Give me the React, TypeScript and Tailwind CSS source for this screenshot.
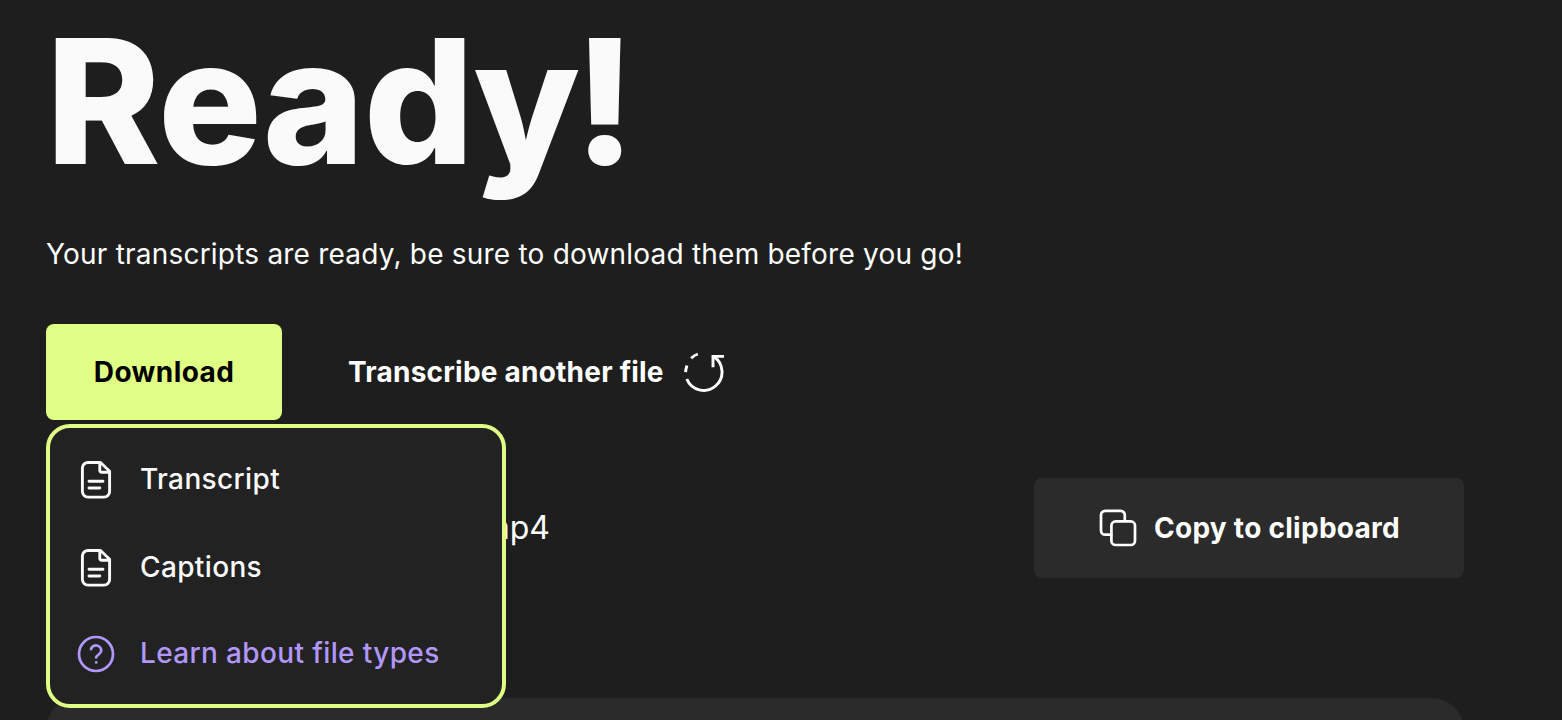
const FileIcon = () => (
  <svg className="size-10 shrink-0" viewBox="0 0 40 40" fill="none" stroke="currentColor" strokeWidth="2.9" strokeLinecap="round" strokeLinejoin="round">
    <path d="M24.5 2.5H12A5.6 5.6 0 0 0 6.4 8.1v23.4A5.6 5.6 0 0 0 12 37.1h16a5.6 5.6 0 0 0 5.6-5.6V11.2Z" />
    <path d="M23.8 2.8v7.4a2 2 0 0 0 2 2h7" />
    <path d="M13 21.3h14M13 28h10.8" />
  </svg>
);

const HelpIcon = () => (
  <svg className="size-10 shrink-0" viewBox="0 0 40 40" fill="none" stroke="currentColor" strokeWidth="2.7" strokeLinecap="round" strokeLinejoin="round">
    <circle cx="20" cy="20" r="17" />
    <path d="M15 15.2a5.2 5.2 0 0 1 10.2 1.6c0 3.4-5.1 4.6-5.1 6.6" />
    <path d="M20.2 28.4h.02" />
  </svg>
);

const CopyIcon = () => (
  <svg className="size-10 shrink-0" viewBox="0 0 40 40" fill="none" stroke="currentColor" strokeWidth="2.7" strokeLinecap="round" strokeLinejoin="round">
    <rect x="13.4" y="13.4" width="23.6" height="23.6" rx="4.2" />
    <path d="M13.2 26.7H7.2A4.2 4.2 0 0 1 3 22.5V7A4.2 4.2 0 0 1 7.2 2.8h15.4A4.2 4.2 0 0 1 26.8 7v6" />
  </svg>
);

const RestartIcon = () => (
  <svg className="size-10 shrink-0" viewBox="0 0 40 40" fill="none" stroke="currentColor" strokeWidth="2.9">
    <path d="M2.8 27A18.3 18.3 0 1 0 29.8 4.8" />
    <path d="M29 15.2V4.4h11" />
    <path d="M1.6 20.2Q1.8 16.6 3 13.4M7.2 6.2Q10 3.4 13.8 2" />
  </svg>
);

export default function App() {
  return (
    <div className="h-[720px] overflow-hidden bg-[#1e1e1e] pl-[46px] pr-[98px] pt-[14px] font-['Inter',sans-serif] text-white whitespace-nowrap">
      <h1 className="text-[173px] leading-[174px] font-extrabold tracking-[-0.8px] text-[#fafafa]">
        Read<span className="tracking-[-6.5px]">y</span>!
      </h1>
      <p className="mt-[46px] text-[28px] leading-10 tracking-[0.21px]">
        Your transcripts are ready, be sure to download them before you go!
      </p>
      <div className="mt-[50px] flex items-center">
        <div className="relative">
          <button className="block h-24 w-[236px] rounded-lg bg-[#e0ff85] text-[28px] font-bold tracking-[0.4px] text-black">Download</button>
          <div className="absolute left-0 top-[100px] z-10 flex h-[284px] w-[460px] flex-col rounded-3xl border-4 border-[#e0ff85] bg-[#222222] pl-[26px] pt-8 text-[28px] leading-[38px] font-medium tracking-[0.36px] text-[#fafafa]">
            <a className="flex items-start gap-6">
              <FileIcon />
              <span>Transcript</span>
            </a>
            <a className="mt-12 flex items-start gap-6">
              <FileIcon />
              <span>Captions</span>
            </a>
            <a className="mt-[46px] flex items-start gap-6 text-[#b197fc]">
              <HelpIcon />
              <span>Learn about file types</span>
            </a>
          </div>
        </div>
        <button className="ml-[66px] flex items-center gap-5 text-[28px] font-bold tracking-[0.22px]">
          <span>Transcribe another file</span>
          <RestartIcon />
        </button>
      </div>
      <div className="mt-[58px] flex items-center justify-between">
        <div className="w-[504px] text-right text-[32px]">interview.mp4</div>
        <button className="flex h-[100px] w-[430px] items-center justify-center gap-4 rounded-lg bg-[#2b2b2b] text-[28px] font-bold tracking-[0.28px]">
          <CopyIcon />
          <span>Copy to clipboard</span>
        </button>
      </div>
      <div className="mt-[120px] h-40 rounded-[32px] bg-[#2b2b2b]"></div>
    </div>
  );
}
